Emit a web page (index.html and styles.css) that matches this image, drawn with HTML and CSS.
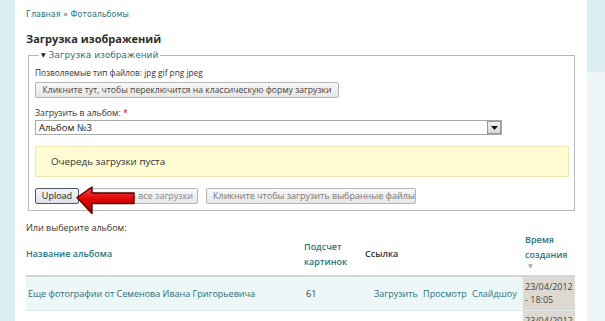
FILE: index.html
```html
<!DOCTYPE html>
<html lang="ru">
<head>
<meta charset="utf-8">
<link rel="stylesheet" href="styles.css">
</head>
<body>
<div class="page">
  <div class="side-left"></div>
  <div class="main">
    <div class="crumbs"><a href="#">Главная</a> » <a href="#">Фотоальбомы</a></div>
    <h1 class="title">Загрузка изображений</h1>
    <fieldset class="box">
      <legend class="legend"><span class="tri">▼</span> Загрузка изображений</legend>
      <div class="types">Позволяемые тип файлов: jpg gif png jpeg</div>
      <button class="btn btn-classic">Кликните тут, чтобы переключится на классическую форму загрузки</button>
      <div class="label">Загрузить в альбом: <span class="req">*</span></div>
      <div class="select"><span class="sel-text">Альбом №3</span><span class="sel-btn"><svg width="7" height="4" viewBox="0 0 7 4"><path d="M0 0H7L3.5 4Z" fill="#111"/></svg></span></div>
      <div class="queue">Очередь загрузки пуста</div>
      <div class="actions">
        <button class="btn btn-upload">Upload</button>
        <button class="btn btn-cancel">Отменить все загрузки</button>
        <button class="btn btn-start">Кликните чтобы загрузить выбранные файлы</button>
        <svg class="arrow" width="60" height="29" viewBox="0 0 60 29">
          <defs>
            <linearGradient id="ag" x1="0" y1="0" x2="0" y2="1">
              <stop offset="0" stop-color="#f24a4a"/>
              <stop offset="0.5" stop-color="#e00000"/>
              <stop offset="1" stop-color="#a80000"/>
            </linearGradient>
          </defs>
          <path d="M1 11.5 L16 1 L16 7 L58 7 L58 17.5 L16 17.5 L16 27.5 Z" fill="url(#ag)" stroke="#5a0000" stroke-width="1.4" stroke-linejoin="round"/>
        </svg>
      </div>
    </fieldset>
    <div class="or">Или выберите альбом:</div>
    <table class="albums">
      <thead>
        <tr>
          <th class="c-name"><a href="#">Название альбома</a></th>
          <th class="c-count"><a href="#">Подсчет<br>картинок</a></th>
          <th class="c-link">Ссылка</th>
          <th class="c-date"><a href="#">Время<br>создания</a><span class="sort">▼</span></th>
        </tr>
      </thead>
      <tbody>
        <tr class="odd">
          <td class="c-name">Еще фотографии от Семенова Ивана Григорьевича</td>
          <td class="c-count">61</td>
          <td class="c-link"><a href="#">Загрузить</a> <a href="#">Просмотр</a> <a href="#">Слайдшоу</a></td>
          <td class="c-date">23/04/2012<br>- 18:05</td>
        </tr>
        <tr class="even">
          <td class="c-name">Архивные фотографии Красносельских от Ивана и Галины</td>
          <td class="c-count">48</td>
          <td class="c-link"><a href="#">Загрузить</a> <a href="#">Просмотр</a> <a href="#">Слайдшоу</a></td>
          <td class="c-date">23/04/2012<br>- 17:40</td>
        </tr>
      </tbody>
    </table>
  </div>
  <div class="side-right">
    <div class="side-right-top"></div>
  </div>
</div>
</body>
</html>
```
FILE: styles.css
```css
* { box-sizing: border-box; }
html, body { margin: 0; padding: 0; background: #fff; }
body {
  font-family: "Open Sans", "DejaVu Sans", sans-serif;
  font-size: 9px;
  color: #333;
  width: 605px;
  height: 321px;
  overflow: hidden;
}
a { color: #2a7480; text-decoration: none; }
.page { display: flex; height: 321px; }
.side-left { width: 15px; background: #d9eef1; flex: none; }
.main { width: 572px; flex: none; padding: 9px 0 0 11px; }
.side-right { width: 18px; flex: none; background: #eef6f8; }
.side-right-top { height: 72px; background: #dcf0f3; }

.crumbs { font-family: "DejaVu Sans", sans-serif; font-size: 8px; color: #2a7480; line-height: 12px; }
.title { margin: 11px 0 0; font-size: 11px; font-weight: bold; color: #2b2b2b; line-height: 14px; }

.box {
  margin: 4px 0 0 2px;
  width: 547px;
  border: 1px solid #b8b8b8;
  padding: 0 5px 6px 6px;
  position: relative;
}
.legend {
  padding: 0 2px;
  margin-left: 4px;
  color: #2a7480;
  font-family: "DejaVu Sans", sans-serif;
  font-size: 9px;
  line-height: 10px;
}
.legend .tri { color: #222; font-size: 6px; vertical-align: 1px; }

.types { line-height: 12px; margin-top: 7px; color: #333; white-space: nowrap; font-size: 8.3px; }
.btn {
  font-family: "Open Sans", "DejaVu Sans", sans-serif;
  font-size: 9px;
  color: #444;
  background: linear-gradient(#f8f8f8, #e6e6e6);
  border: 1px solid #b5b5b5;
  border-radius: 2px;
  height: 16px;
  padding: 0 6px;
  line-height: 14px;
  white-space: nowrap;
}
.btn-classic { margin-top: 3px; width: 304px; text-align: center; padding: 0; font-size: 8.65px; }
.label { margin-top: 9px; line-height: 12px; font-size: 8.7px; }
.req { color: #d00; }
.select {
  margin-top: 1px;
  width: 467px;
  height: 15px;
  border: 1px solid #a9a9a9;
  display: flex;
  justify-content: space-between;
  align-items: center;
  padding-left: 3px;
  background: #fff;
}
.sel-text { font-size: 9.5px; color: #111; }
.sel-btn {
  width: 14px; height: 13px;
  border: 1px solid #999;
  background: linear-gradient(#f2f2f2, #d8d8d8);
  display: flex; align-items: center; justify-content: center;
}
.queue {
  margin-top: 11px;
  width: 534px;
  height: 31px;
  background: #fffbd2;
  border: 1px solid #f0e6b0;
  padding-left: 15px;
  line-height: 29px;
  font-size: 9.8px;
  color: #333;
}
.actions { margin-top: 11px; display: flex; gap: 8px; position: relative; }
.btn-upload {
  width: 44px;
  border: 1px solid #4c5866;
  background: linear-gradient(#f4f6f8, #dde2e8);
  color: #222;
  padding: 0;
  font-size: 9px;
}
.btn-cancel { width: 111px; color: #888; padding: 0 4px; text-align: right; }
.btn-start { width: 210px; color: #777; }
.arrow { position: absolute; left: 41px; top: -2px; }

.or { margin-top: 12px; line-height: 10px; color: #333; }
.albums {
  margin-top: -1px;
  width: 549px;
  border-collapse: collapse;
  font-size: 9px;
  table-layout: fixed;
}
.albums th {
  text-align: left;
  font-weight: 600;
  line-height: 15px;
  padding: 4px 0 4px;
  vertical-align: middle;
  border-bottom: 2px solid #cfd4d6;
  color: #333;
}
.albums th a { color: #2a7480; }
.albums th.c-name { width: 278px; }
.albums th.c-count { width: 61px; }
.albums th.c-link { width: 158px; }
.albums th.c-date { width: 52px; padding: 0 0 4px 2px; }
.sort { display: block; color: #a8adb0; font-size: 6px; line-height: 9px; padding-left: 3px; }
.albums td {
  line-height: 13px;
  padding: 3px 0 4px;
  height: 34px;
  border-bottom: 1px solid #e2ebec;
  color: #2d4e55;
  white-space: nowrap;
  overflow: hidden;
}
.albums tr.odd td { background: #eef7f8; }
.albums td.c-name { padding-left: 2px; color: #2a6e78; }
.albums td.c-count { padding-left: 2px; color: #333; }
.albums td.c-link { padding-left: 9px; word-spacing: 3px; }
.albums td.c-date { background: #ddd9d0 !important; color: #444; padding-left: 2px; }
```
